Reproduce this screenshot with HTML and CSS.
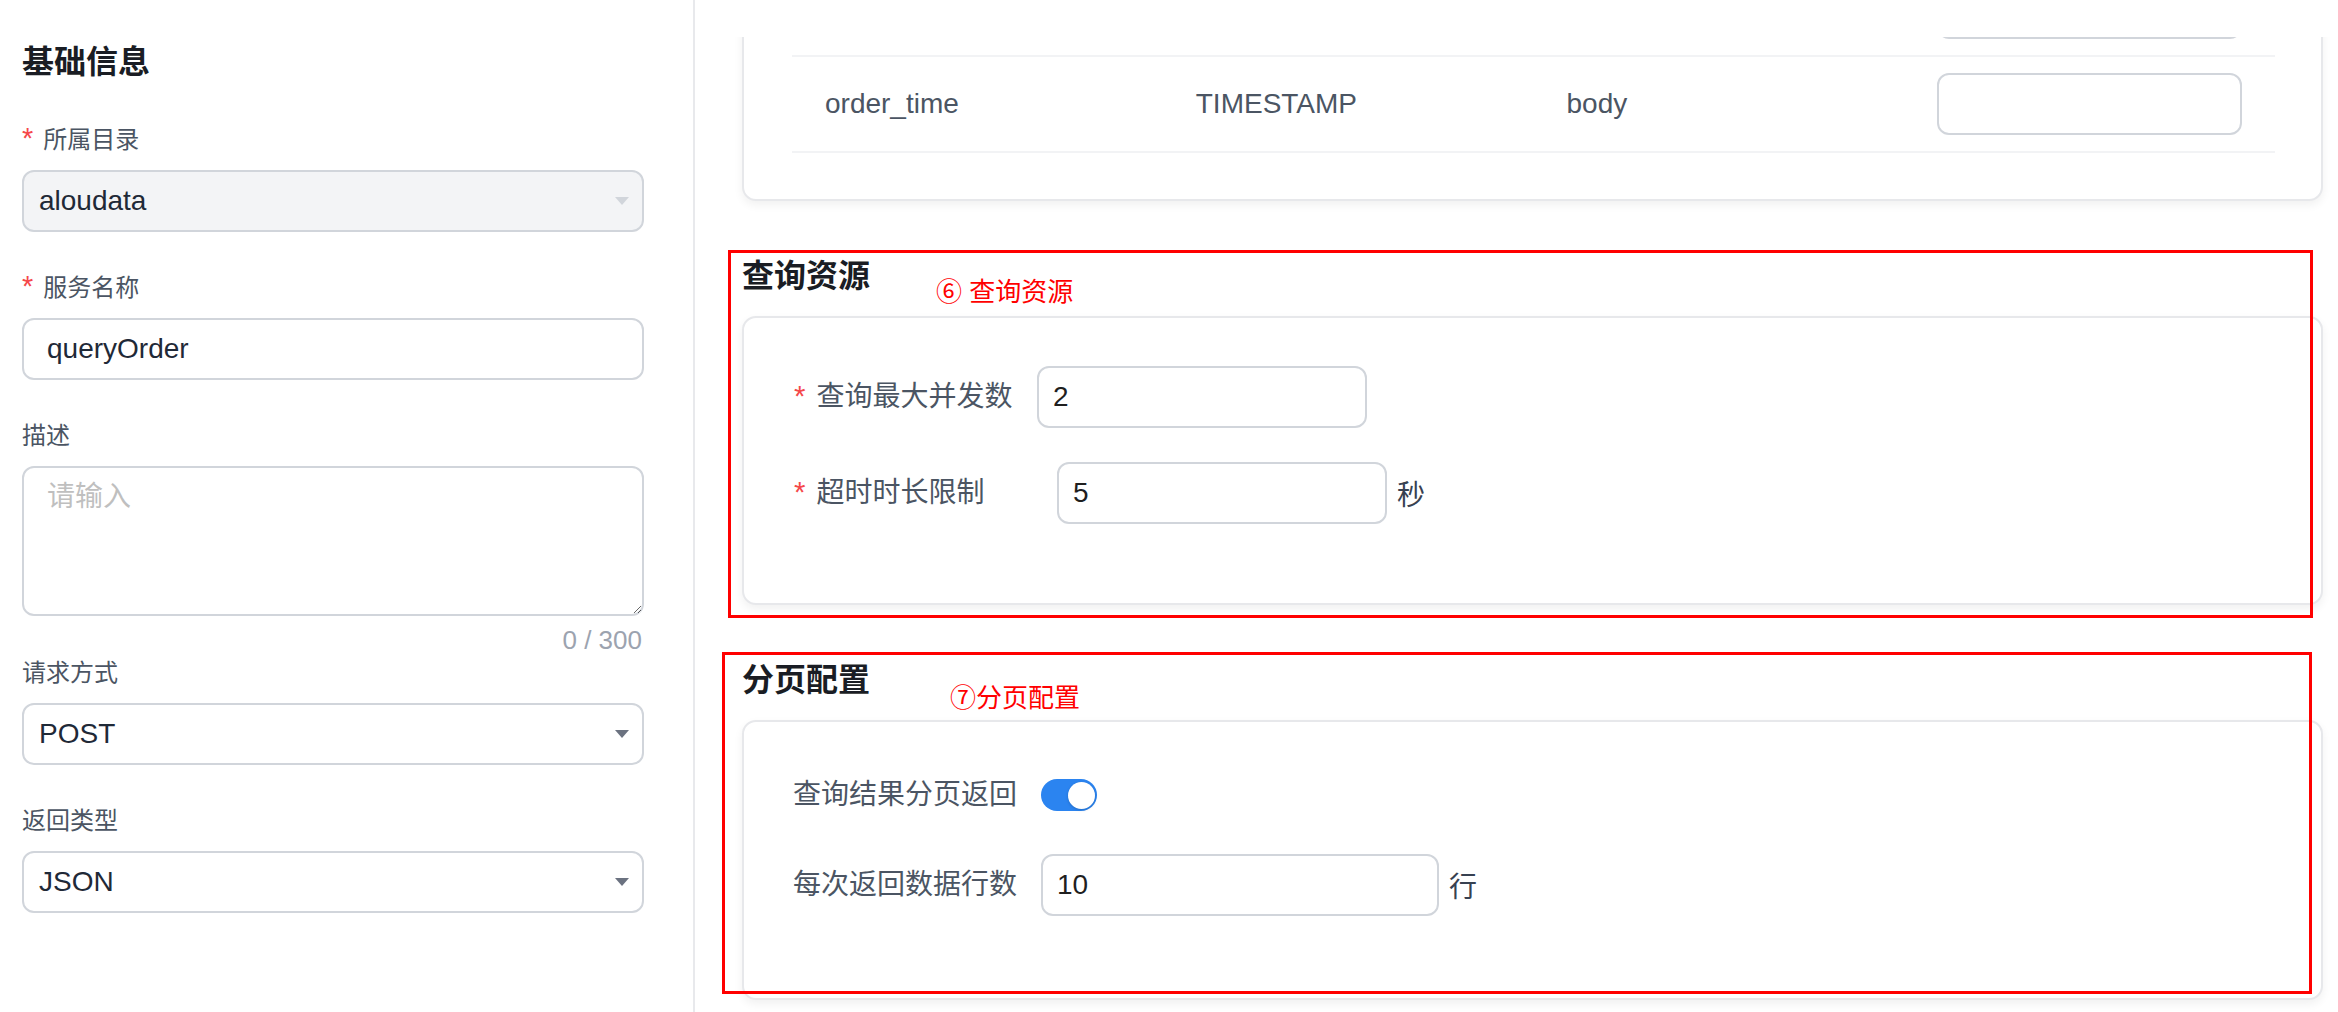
FILE: index.html
```html
<!DOCTYPE html>
<html lang="zh-CN">
<head>
<meta charset="utf-8">
<title>服务配置</title>
<link rel="stylesheet" href="styles.css">
</head>
<body>
<div class="page">
  <aside class="side">
    <h2 class="side-title">基础信息</h2>
    <div class="field">
      <div class="label"><span class="req">*</span>所属目录</div>
      <div class="select disabled"><span>aloudata</span><i class="caret"></i></div>
    </div>
    <div class="field">
      <div class="label"><span class="req">*</span>服务名称</div>
      <div class="input">queryOrder</div>
    </div>
    <div class="field field--area">
      <div class="label">描述</div>
      <textarea class="textarea" placeholder="请输入"></textarea>
      <div class="counter">0 / 300</div>
    </div>
    <div class="field">
      <div class="label">请求方式</div>
      <div class="select"><span>POST</span><i class="caret"></i></div>
    </div>
    <div class="field">
      <div class="label">返回类型</div>
      <div class="select"><span>JSON</span><i class="caret"></i></div>
    </div>
  </aside>
  <main class="main">
    <div class="main-top"></div>
    <div class="main-scroll">
      <div class="card table-card">
        <div class="trow">
          <div class="cell"></div>
          <div class="cell"></div>
          <div class="cell"></div>
          <div class="cell"><div class="cell-input"></div></div>
        </div>
        <div class="trow">
          <div class="cell">order_time</div>
          <div class="cell">TIMESTAMP</div>
          <div class="cell">body</div>
          <div class="cell"><div class="cell-input"></div></div>
        </div>
      </div>

      <section class="section">
        <h3 class="sec-title">查询资源</h3>
        <div class="card form-card">
          <div class="frow">
            <div class="flabel flabel--a"><span class="req">*</span>查询最大并发数</div>
            <div class="finput">2</div>
          </div>
          <div class="frow">
            <div class="flabel flabel--b"><span class="req">*</span>超时时长限制</div>
            <div class="finput">5</div>
            <span class="unit">秒</span>
          </div>
        </div>
        <div class="mark mark-1"></div>
        <div class="note note-1">⑥ 查询资源</div>
      </section>

      <section class="section">
        <h3 class="sec-title">分页配置</h3>
        <div class="card form-card page-card">
          <div class="frow">
            <div class="flabel flabel--c">查询结果分页返回</div>
            <div class="switch"><span class="knob"></span></div>
          </div>
          <div class="frow">
            <div class="flabel flabel--c">每次返回数据行数</div>
            <div class="finput finput--wide">10</div>
            <span class="unit">行</span>
          </div>
        </div>
        <div class="mark mark-2"></div>
        <div class="note note-2">⑦分页配置</div>
      </section>
    </div>
  </main>
</div>
</body>
</html>
```

FILE: styles.css
```css
* { box-sizing: border-box; }
html, body { margin: 0; padding: 0; background: #fff; }
body {
  font-family: "Liberation Sans", "Noto Sans CJK SC", sans-serif;
  color: #1f2937;
}
.page { display: flex; width: 2338px; height: 1012px; overflow: hidden; }

/* left side */
.side {
  width: 695px;
  flex: none;
  border-right: 2px solid #e8e9ec;
  padding: 38px 49px 0 22px;
}
.side-title {
  margin: 0 0 36px;
  font-size: 32px;
  line-height: 48px;
  font-weight: 700;
  color: #1a1d24;
}
.field { margin-bottom: 38px; }
.field--area { margin-bottom: 0; }
.label {
  height: 36px;
  font-size: 24px;
  line-height: 36px;
  color: #4b5563;
  margin-bottom: 12px;
}
.req {
  color: #f5484a;
  margin-right: 10px;
  font-family: "Liberation Sans", sans-serif;
  font-size: 1.2em;
  line-height: 0;
}
.select {
  height: 62px;
  border: 2px solid #d1d5db;
  border-radius: 12px;
  display: flex;
  align-items: center;
  justify-content: space-between;
  padding: 0 13px 0 15px;
  font-size: 28px;
  color: #1f2937;
  background: #fff;
}
.select.disabled { background: #f3f4f6; }
.caret {
  width: 0;
  height: 0;
  border-left: 7px solid transparent;
  border-right: 7px solid transparent;
  border-top: 8px solid #6b7280;
}
.disabled .caret { border-top-color: #d1d5db; }
.input {
  height: 62px;
  border: 2px solid #d1d5db;
  border-radius: 12px;
  display: flex;
  align-items: center;
  padding: 0 23px;
  font-size: 28px;
  color: #1f2937;
}
.textarea {
  display: block;
  width: 100%;
  height: 150px;
  margin: 0;
  border: 2px solid #d1d5db;
  border-radius: 12px;
  padding: 11px 23px;
  font-family: "Liberation Sans", "Noto Sans CJK SC", sans-serif;
  font-size: 28px;
  line-height: 36px;
  color: #1f2937;
  resize: vertical;
  outline: none;
}
.textarea::placeholder { color: #bfbfbf; }
.counter {
  margin-top: 9px;
  text-align: right;
  font-size: 26px;
  line-height: 30px;
  color: #9ca3af;
  padding-right: 2px;
}

/* right side */
.main { flex: 1; display: flex; flex-direction: column; min-width: 0; }
.main-top { height: 37px; flex: none; background: #fff; }
.main-scroll { flex: 1; overflow: hidden; padding: 0 15px 0 47px; }
.card {
  border: 2px solid #e7e8eb;
  border-radius: 14px;
  background: #fff;
  box-shadow: 0 4px 10px rgba(0, 0, 0, 0.06);
}
.table-card { margin-top: -78px; padding: 0 46px 46px 48px; }
.trow {
  display: grid;
  grid-template-columns: repeat(4, 1fr);
  height: 96px;
  align-items: center;
  border-bottom: 2px solid #f2f3f5;
}
.cell { padding-left: 33px; font-size: 28px; color: #4b5563; }
.cell-input {
  width: 305px;
  height: 62px;
  border: 2px solid #d1d5db;
  border-radius: 12px;
}

.section { position: relative; margin-top: 51px; }
.sec-title {
  margin: 0 0 16px;
  font-size: 32px;
  line-height: 48px;
  font-weight: 700;
  color: #1a1d24;
}
.form-card {
  padding: 48px 48px 79px 50px;
  display: flex;
  flex-direction: column;
  gap: 34px;
}
.page-card { padding: 42px 48px 82px 49px; gap: 28px; }
.frow { display: flex; align-items: center; height: 62px; }
.flabel { flex: none; font-size: 28px; line-height: 40px; color: #4b5563; white-space: nowrap; }
.flabel .req { font-size: 1.05em; margin-right: 11px; }
.flabel--a { width: 243px; }
.flabel--b { width: 263px; }
.flabel--c { width: 248px; }
.finput {
  width: 330px;
  height: 62px;
  border: 2px solid #d1d5db;
  border-radius: 12px;
  display: flex;
  align-items: center;
  padding: 0 14px;
  font-size: 28px;
  color: #1f1f1f;
}
.finput--wide { width: 398px; }
.unit { margin-left: 10px; font-size: 28px; color: #374151; }
.switch {
  width: 56px;
  height: 32px;
  border-radius: 16px;
  background: #2b84f0;
  display: flex;
  justify-content: flex-end;
  align-items: center;
  padding: 0 2.5px;
}
.knob {
  width: 27px;
  height: 27px;
  border-radius: 50%;
  background: #fff;
  box-shadow: 0 1px 3px rgba(0, 0, 0, 0.18);
}

.mark { position: absolute; border: 3px solid #ff0000; pointer-events: none; }
.mark-1 { top: -2px; left: -14px; right: 10px; bottom: -13px; }
.mark-2 { top: -4px; left: -20px; right: 11px; bottom: 6px; }
.note {
  position: absolute;
  font-size: 26px;
  line-height: 36px;
  color: #ff0000;
  white-space: nowrap;
}
.note-1 { left: 194px; top: 22px; }
.note-2 { left: 208px; top: 24px; }
```
